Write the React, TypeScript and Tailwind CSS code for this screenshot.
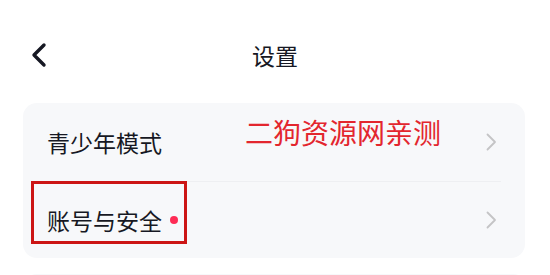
import React from "react";

const Chevron = () => (
  <svg width="12" height="20" viewBox="0 0 12 20" fill="none">
    <path d="M2.5 2.5 L10 10 L2.5 17.5" stroke="#c4c4c6" strokeWidth="1.8" strokeLinecap="round" strokeLinejoin="round" />
  </svg>
);

export default function App() {
  return (
    <div
      className="w-[550px] h-[275px] bg-white overflow-hidden relative"
      style={{ fontFamily: '"Noto Sans CJK SC", "Noto Sans", sans-serif' }}
    >
      <div className="h-[103px] flex items-start pt-[32px] relative">
        <div className="pl-[30px] pt-[10px]">
          <svg width="18" height="26" viewBox="0 0 18 26" fill="none">
            <path d="M14 3 L4 13 L14 23" stroke="#161823" strokeWidth="3.4" strokeLinecap="round" strokeLinejoin="round" />
          </svg>
        </div>
        <div className="absolute left-0 right-0 top-[37px] text-center text-[23px] leading-[36px] text-[#161823]">设置</div>
      </div>
      <div className="mx-[23px] w-[502px] rounded-[14px] bg-[#f7f8fa]">
        <div className="h-[78px] flex items-center pl-[24px] pr-[28px] relative">
          <span className="text-[23px] text-[#161823] pt-[1px]">青少年模式</span>
          <span className="absolute left-[222px] top-[9px] text-[28px] leading-[40px] text-[#e3262e]">二狗资源网亲测</span>
          <span className="ml-auto"><Chevron /></span>
        </div>
        <div className="mx-[24px] h-px bg-[#eeeff2]" />
        <div className="h-[76px] flex items-center pl-[24px] pr-[28px] relative">
          <span className="text-[23px] text-[#161823]">账号与安全</span>
          <span className="ml-[8px] w-[8px] h-[8px] rounded-full bg-[#fe2c55]" />
          <span className="ml-auto"><Chevron /></span>
          <div className="absolute left-[8px] top-[-1px] w-[156px] h-[63px] border-[3px] border-[#cc1515]" />
        </div>
      </div>
      <div className="mx-[23px] mt-[16px] h-[40px] rounded-[14px] bg-[#f7f8fa]" />
    </div>
  );
}
